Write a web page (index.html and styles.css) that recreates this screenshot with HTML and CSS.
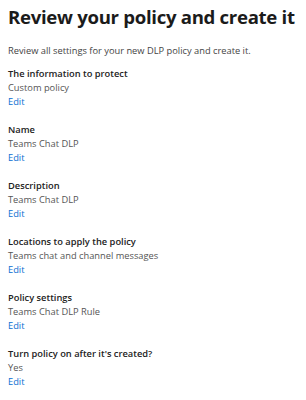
FILE: index.html
```html
<!DOCTYPE html>
<html lang="en">
<head>
    <meta charset="UTF-8">
    <meta name="viewport" content="width=device-width, initial-scale=1.0">
    <title>Review policy</title>
    <link rel="stylesheet" href="styles.css">
</head>
<body>
    <div class="review">
        <h1>Review your policy and create it</h1>
        <p class="intro">Review all settings for your new DLP policy and create it.</p>

        <div class="section">
            <div class="label">The information to protect</div>
            <div class="value">Custom policy</div>
            <a class="edit" href="#">Edit</a>
        </div>
        <div class="section">
            <div class="label">Name</div>
            <div class="value">Teams Chat DLP</div>
            <a class="edit" href="#">Edit</a>
        </div>
        <div class="section">
            <div class="label">Description</div>
            <div class="value">Teams Chat DLP</div>
            <a class="edit" href="#">Edit</a>
        </div>
        <div class="section">
            <div class="label">Locations to apply the policy</div>
            <div class="value">Teams chat and channel messages</div>
            <a class="edit" href="#">Edit</a>
        </div>
        <div class="section">
            <div class="label">Policy settings</div>
            <div class="value">Teams Chat DLP Rule</div>
            <a class="edit" href="#">Edit</a>
        </div>
        <div class="section">
            <div class="label">Turn policy on after it's created?</div>
            <div class="value">Yes</div>
            <a class="edit" href="#">Edit</a>
        </div>
    </div>
</body>
</html>
```

FILE: styles.css
```css
body {
    font-family: "Open Sans", sans-serif;
    background-color: #fff;
    margin: 0;
}
.review {
    padding: 0 8px;
}
.review h1 {
    font-size: 18.6px;
    font-weight: 700;
    letter-spacing: -0.3px;
    color: #1b1b1b;
    margin: 3px 0 0;
    line-height: 28px;
    white-space: nowrap;
}
.intro {
    font-size: 9.3px;
    color: #444;
    margin: 13px 0 9px;
    line-height: 14px;
}
.section {
    display: flex;
    flex-direction: column;
    align-items: flex-start;
    margin-bottom: 14px;
    font-size: 9.3px;
    line-height: 14px;
}
.label {
    font-weight: 600;
    color: #222;
}
.value {
    color: #555;
}
.edit {
    color: #0a6ed1;
    text-decoration: none;
}
```
